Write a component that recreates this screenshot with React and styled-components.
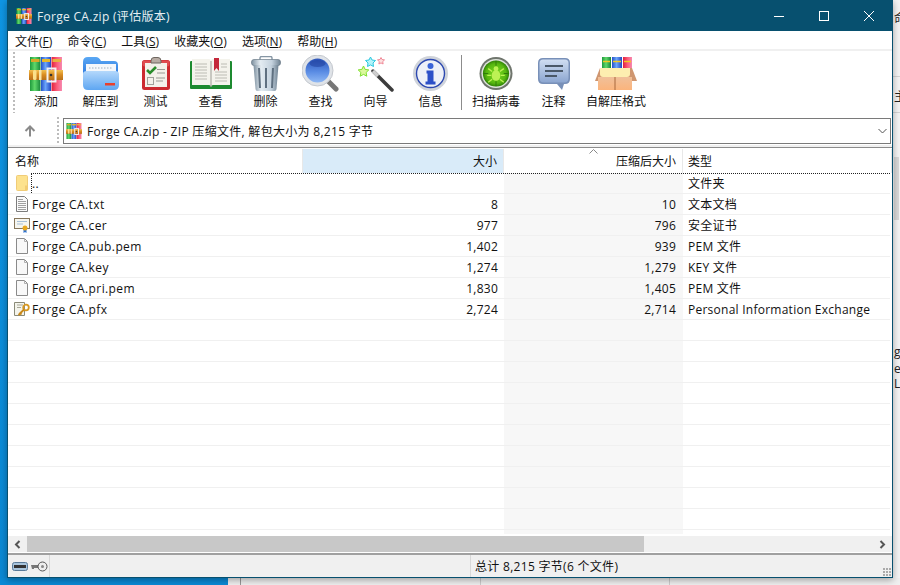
import React from "react";
import styled, { createGlobalStyle } from "styled-components";

const GlobalStyle = createGlobalStyle`
  html, body { margin: 0; padding: 0; height: 100%; overflow: hidden; }
  body { font-family: "Open Sans", "Noto Sans CJK SC", sans-serif; }
  * { box-sizing: border-box; }
`;

// shared gradients for the toolbar drawings
const IconDefs = () => (
  <svg width="0" height="0" style={{ position: "absolute" }}>
    <defs>
      <linearGradient id="bookGreen" x1="0" x2="1" y1="0" y2="0">
        <stop offset="0" stopColor="#1f9a3c" /><stop offset=".45" stopColor="#5fd86a" /><stop offset="1" stopColor="#17863a" />
      </linearGradient>
      <linearGradient id="bookBlue" x1="0" x2="1" y1="0" y2="0">
        <stop offset="0" stopColor="#2450c8" /><stop offset=".45" stopColor="#6aa4fa" /><stop offset="1" stopColor="#2248c0" />
      </linearGradient>
      <linearGradient id="bookRed" x1="0" x2="1" y1="0" y2="0">
        <stop offset="0" stopColor="#e0203c" /><stop offset=".5" stopColor="#fb5a78" /><stop offset="1" stopColor="#f78ab0" />
      </linearGradient>
      <linearGradient id="belt" x1="0" x2="0" y1="0" y2="1">
        <stop offset="0" stopColor="#f2c050" /><stop offset=".5" stopColor="#d88a20" /><stop offset="1" stopColor="#b8701a" />
      </linearGradient>
      <linearGradient id="folderBack" x1="0" x2="0" y1="0" y2="1">
        <stop offset="0" stopColor="#5aa8f4" /><stop offset="1" stopColor="#1f6ad8" />
      </linearGradient>
      <linearGradient id="folderFront" x1="0" x2="0" y1="0" y2="1">
        <stop offset="0" stopColor="#b4d8fb" /><stop offset="1" stopColor="#5ea6f2" />
      </linearGradient>
      <linearGradient id="steel" x1="0" x2="1" y1="0" y2="0">
        <stop offset="0" stopColor="#7d909f" /><stop offset=".3" stopColor="#e4ecf2" /><stop offset=".7" stopColor="#c4d2de" /><stop offset="1" stopColor="#6f8292" />
      </linearGradient>
      <linearGradient id="glass" x1="0" x2="0" y1="0" y2="1">
        <stop offset="0" stopColor="#2c54b8" /><stop offset=".55" stopColor="#5a8ce4" /><stop offset="1" stopColor="#8fb8f4" />
      </linearGradient>
      <linearGradient id="bubble" x1="0" x2="0" y1="0" y2="1">
        <stop offset="0" stopColor="#d0def2" /><stop offset="1" stopColor="#8ca6d0" />
      </linearGradient>
      <linearGradient id="carton" x1="0" x2="0" y1="0" y2="1">
        <stop offset="0" stopColor="#f0c09a" /><stop offset="1" stopColor="#fbb47c" />
      </linearGradient>
      <radialGradient id="radar">
        <stop offset="0" stopColor="#78d820" /><stop offset=".75" stopColor="#58b810" /><stop offset="1" stopColor="#2f8206" />
      </radialGradient>
    </defs>
  </svg>
);

const RarIcon = ({ size = 16 }) => (
  <svg width={size} height={size} viewBox="0 0 34 34">
    <rect x="1" y="0" width="10.500" height="34" fill="url(#bookGreen)" />
    <rect x="12" y="0" width="10" height="34" fill="url(#bookBlue)" />
    <rect x="22.500" y="0" width="10.500" height="34" fill="url(#bookRed)" />
    <rect x="2" y="2" width="8.500" height="3" fill="#d8a828" />
    <rect x="13" y="2" width="8" height="3" fill="#e8b828" />
    <rect x="23.500" y="2" width="8.500" height="3" fill="#e8b040" />
    <rect x="0" y="13" width="34" height="10" fill="url(#belt)" />
    <rect x="4" y="13" width="3.500" height="10" rx="1.500" fill="#fbe08a" />
    <rect x="10" y="13" width="2.500" height="10" fill="#f8e4a8" />
    <rect x="18.500" y="11.500" width="8" height="13" fill="none" stroke="#f2f2f2" strokeWidth="2" />
    <circle cx="22" cy="18" r="1.300" fill="#333" />
  </svg>
);

const FolderIcon = () => (
  <svg width="36" height="33" viewBox="0 0 36 33">
    <path d="M0 5q0-5 5-5h8q3 0 5 4h13q4 0 4 4v16H0z" fill="url(#folderBack)" />
    <rect x="3" y="7" width="30" height="10" fill="#f4f7fb" />
    <path d="M6 11h24" stroke="#9fb0c0" strokeDasharray="1.500 1.500" />
    <path d="M0 17q0-3 4-3h28q4 0 4 3v11q0 5-5 5H5q-5 0-5-5z" fill="url(#folderFront)" />
    <rect x="22" y="26" width="10" height="2.500" fill="#e8402c" />
  </svg>
);

const TestIcon = () => (
  <svg width="28" height="33" viewBox="0 0 28 33">
    <rect x="0" y="3" width="28" height="30" rx="2.500" fill="#cc2a30" />
    <rect x="0.500" y="3.500" width="27" height="6" rx="2" fill="#e04c50" />
    <rect x="3" y="6" width="22" height="24" fill="#f4f1ea" />
    <path d="M9 4q0-3.500 3-3.500h4q3 0 3 3.500v2H9z" fill="#b8aca4" stroke="#6e6660" />
    <path d="M5 13l3 3 6-6" fill="none" stroke="#2a8c2a" strokeWidth="2.600" />
    <path d="M15 12.500h8M15 16h8M14 21h9M14 24h7" stroke="#9a9a94" />
    <rect x="5.500" y="20.500" width="6" height="7" fill="none" stroke="#a0a09a" />
  </svg>
);

const BookIcon = () => (
  <svg width="42" height="31" viewBox="0 0 42 31">
    <rect x="0" y="3" width="42" height="28" rx="1" fill="#1d8a30" />
    <path d="M2 1h17q2 0 2 2q0-2 2-2h17v26H23q-2 0-2 2q0-2-2-2H2z" fill="#f4f3ec" />
    <path d="M5 6h12M5 9h12M5 12h12M5 15h12M5 18h12M5 21h12M25 14h12M25 17h12M25 20h12M25 23h12M31 6h6M31 9h6" stroke="#bcbcb4" />
    <path d="M24 0h5v13l-2.500-3-2.500 3z" fill="#c4283a" />
    <path d="M21 3v26" stroke="#9c9c94" />
  </svg>
);

const TrashIcon = () => (
  <svg width="30" height="35" viewBox="0 0 30 35">
    <rect x="9" y="0.500" width="12" height="5" rx="1.500" fill="none" stroke="#8696a4" strokeWidth="1.400" />
    <rect x="0.500" y="3.500" width="29" height="6" rx="2.500" fill="url(#steel)" stroke="#6b7b88" strokeWidth="0.700" />
    <path d="M2.500 9h25l-2 24q-.2 2-2 2h-17q-2 0-2-2z" fill="url(#steel)" />
    <path d="M8 12l1 20M15 12v20M22 12l-1 20" stroke="#5f7080" strokeWidth="2" />
  </svg>
);

const SearchIcon = () => (
  <svg width="37" height="37" viewBox="0 0 37 37">
    <path d="M25 25l9 9" stroke="#777" strokeWidth="5" strokeLinecap="round" />
    <circle cx="15.500" cy="15.500" r="15.500" fill="#dfe3e8" stroke="#c4c8ce" />
    <circle cx="15.500" cy="15.500" r="12" fill="url(#glass)" />
    <ellipse cx="15.500" cy="8.500" rx="8" ry="3.500" fill="#1f3f9c" opacity=".55" />
  </svg>
);

const WizardIcon = () => (
  <svg width="36" height="36" viewBox="0 0 36 36">
    <path d="M15 15l19 19" stroke="#3c3c3c" strokeWidth="3.500" strokeLinecap="round" />
    <path d="M15 15l5 5" stroke="#cfcfcf" strokeWidth="3.500" />
    <path d="M12.500 1l1.500 3 3.500.5-2.500 2.500.5 3.500-3-1.600-3 1.600.5-3.500L7.500 4.500 11 4z" fill="#b4f4fa" stroke="#2cc8e0" />
    <path d="M23 1.500l1 2 2.500.4-1.800 1.700.4 2.400-2.100-1.100-2.100 1.100.4-2.400-1.800-1.700 2.500-.4z" fill="#fce0e0" stroke="#f08a98" />
    <path d="M5.500 10l1.600 3.400 3.700.5-2.700 2.600.7 3.700-3.300-1.800-3.300 1.800.7-3.700L.2 13.900l3.700-.5z" fill="#dcf89c" stroke="#80e030" />
  </svg>
);

const InfoIcon = () => (
  <svg width="35" height="35" viewBox="0 0 35 35">
    <circle cx="17.500" cy="17.500" r="17.500" fill="#cfd3da" />
    <circle cx="17.500" cy="17.500" r="14" fill="#eef1f8" stroke="#2c48b0" strokeWidth="1.400" />
    <circle cx="17.500" cy="10" r="3" fill="#3a64d8" />
    <path d="M13.500 14.500h7v11h2v3h-10v-3h2v-8h-1z" fill="#2c50c8" />
  </svg>
);

const VirusIcon = () => (
  <svg width="34" height="33" viewBox="0 0 34 34">
    <circle cx="17" cy="17" r="17" fill="#6f756d" />
    <circle cx="17" cy="17" r="15" fill="#dfe4dc" />
    <circle cx="17" cy="17" r="13.500" fill="url(#radar)" />
    <path d="M17 4v5M17 25v5M4 17h5M25 17h5" stroke="#2f7a08" />
    <ellipse cx="17" cy="19" rx="4.500" ry="5.500" fill="#bcf254" />
    <circle cx="17" cy="12" r="2.500" fill="#bcf254" />
    <path d="M13 15l-4-3M21 15l4-3M12 19H8M22 19h4M13 23l-4 3M21 23l4 3" stroke="#bcf254" strokeWidth="1.400" />
  </svg>
);

const CommentIcon = () => (
  <svg width="32" height="32" viewBox="0 0 32 32">
    <path d="M5 0h22q5 0 5 5v16q0 5-5 5h-1l-2 6-5-6H5q-5 0-5-5V5q0-5 5-5z" fill="#7890b8" />
    <path d="M5 1.500h22q3.500 0 3.500 3.500v15q0 4.500-4.500 4.500H6q-4.500 0-4.500-4.500V5q0-3.500 3.500-3.500z" fill="url(#bubble)" />
    <path d="M7 8h18M7 13h18M7 18h12" stroke="#4a5868" strokeWidth="1.800" />
  </svg>
);

const SfxIcon = () => (
  <svg width="42" height="33" viewBox="0 0 42 33">
    <rect x="7" y="0" width="9" height="14" fill="url(#bookGreen)" />
    <rect x="17" y="0" width="10" height="14" fill="url(#bookBlue)" />
    <rect x="28" y="0" width="9" height="14" fill="url(#bookRed)" />
    <path d="M8 4.500h7M18 4.500h8M29 4.500h7" stroke="#f4c820" strokeWidth="1.600" />
    <path d="M0 24l5-13h32l5 13z" fill="#cf9670" />
    <path d="M5 11h30v6q0 3-3 3H8q-3 0-3-3z" fill="#fdeeb0" />
    <rect x="3" y="20" width="34" height="13" fill="url(#carton)" />
    <path d="M20 20v13" stroke="#a8693c" />
  </svg>
);

const FileIcon = () => (
  <svg width="12" height="16" viewBox="0 0 12 16">
    <path d="M.5.5h8l3 3v12H.5z" fill="#f8f8f8" stroke="#8a8a8a" />
    <path d="M8.500.5v3h3" fill="none" stroke="#b0b0b0" />
  </svg>
);

const TextIcon = () => (
  <svg width="12" height="16" viewBox="0 0 12 16">
    <path d="M.5.5h8l3 3v12H.5z" fill="#fafafa" stroke="#7c7c7c" />
    <path d="M2 3.500h5M2 5.500h8M2 7.500h8M2 9.500h8M2 11.500h8M2 13.500h8" stroke="#a0a0a0" />
  </svg>
);

const CertIcon = () => (
  <svg width="16" height="16" viewBox="0 0 16 16">
    <rect x=".5" y="1.500" width="15" height="10" fill="#f6f6f0" stroke="#86765c" />
    <path d="M3 4.500h10M3 7h6" stroke="#a8c0d8" />
    <path d="M9.500 12v4l1.500-1 1.500 1v-4" fill="#2c70d0" />
    <circle cx="11" cy="11" r="2.500" fill="#e8a820" />
  </svg>
);

const PfxIcon = () => (
  <svg width="16" height="16" viewBox="0 0 16 16">
    <path d="M.5 1.500h10v13H.5z" fill="#f4f4ec" stroke="#8a8a78" />
    <path d="M3 4h6M3 6.500h4" stroke="#a8a898" />
    <circle cx="12" cy="6.500" r="2.800" fill="none" stroke="#d89820" strokeWidth="1.800" />
    <path d="M10 8.500 4.500 14M5.500 11.500l2 2" stroke="#c88818" strokeWidth="1.800" />
  </svg>
);

const UpFolderIcon = () => (
  <svg width="12" height="16" viewBox="0 0 12 16">
    <rect x=".5" y=".5" width="11" height="15" rx="1" fill="#fde28e" stroke="#f0cc78" />
    <rect x="9" y="10.500" width="2.500" height="5" fill="#f2cc74" />
  </svg>
);

const MinIcon = () => (
  <svg width="10" height="10" viewBox="0 0 10 10"><path d="M0 5.500h10" stroke="#fff" /></svg>
);
const MaxIcon = () => (
  <svg width="10" height="10" viewBox="0 0 10 10"><rect x=".5" y=".5" width="9" height="9" fill="none" stroke="#fff" /></svg>
);
const CloseIcon = () => (
  <svg width="10" height="10" viewBox="0 0 10 10"><path d="M0 0l10 10M10 0L0 10" stroke="#fff" /></svg>
);
const UpArrow = () => (
  <svg width="12" height="12" viewBox="0 0 12 12"><path d="M6 11.500V1.500M1.500 6 6 1.500 10.500 6" fill="none" stroke="#8a8a8a" strokeWidth="2" /></svg>
);
const ChevronDown = () => (
  <svg width="9" height="6" viewBox="0 0 9 6"><path d="M.5 1l4 4 4-4" fill="none" stroke="#555" /></svg>
);
const SortCaret = () => (
  <svg width="9" height="5" viewBox="0 0 9 5"><path d="M.5 4.500l4-4 4 4" fill="none" stroke="#888" /></svg>
);
const ScrollLeft = () => (
  <svg width="7" height="9" viewBox="0 0 7 9"><path d="M5.500 1 2 4.500 5.500 8" fill="none" stroke="#555" strokeWidth="2" /></svg>
);
const ScrollRight = () => (
  <svg width="7" height="9" viewBox="0 0 7 9"><path d="M1.500 1 5 4.500 1.500 8" fill="none" stroke="#555" strokeWidth="2" /></svg>
);
const DriveIcon = () => (
  <svg width="16" height="9" viewBox="0 0 16 9"><rect x=".5" y=".5" width="15" height="8" rx="2" fill="#a8c4dc" stroke="#5a7a98" /><rect x="2" y="3" width="12" height="3" fill="#333" /></svg>
);
const KeyIcon = () => (
  <svg width="17" height="11" viewBox="0 0 17 11"><path d="M0 4h9v3H3v1H1z" fill="#777" /><circle cx="11.500" cy="5.500" r="4.500" fill="#eee" stroke="#555" /><circle cx="11.500" cy="5.500" r="1.500" fill="#888" /></svg>
);

const menus = [
  ["文件", "F"], ["命令", "C"], ["工具", "S"], ["收藏夹", "O"], ["选项", "N"], ["帮助", "H"],
];

const leftTools = [
  { label: "添加", width: 54, icon: <RarIcon size={34} /> },
  { label: "解压到", width: 55, icon: <FolderIcon /> },
  { label: "测试", width: 55, icon: <TestIcon /> },
  { label: "查看", width: 55, icon: <BookIcon /> },
  { label: "删除", width: 55, icon: <TrashIcon /> },
  { label: "查找", width: 55, icon: <SearchIcon /> },
  { label: "向导", width: 55, icon: <WizardIcon /> },
  { label: "信息", width: 55, icon: <InfoIcon /> },
];

const rightTools = [
  { label: "扫描病毒", width: 66, icon: <VirusIcon /> },
  { label: "注释", width: 49, icon: <CommentIcon /> },
  { label: "自解压格式", width: 76, icon: <SfxIcon /> },
];

const files = [
  { name: "..", size: "", packed: "", type: "文件夹", icon: <UpFolderIcon /> },
  { name: "Forge CA.txt", size: "8", packed: "10", type: "文本文档", icon: <TextIcon /> },
  { name: "Forge CA.cer", size: "977", packed: "796", type: "安全证书", icon: <CertIcon /> },
  { name: "Forge CA.pub.pem", size: "1,402", packed: "939", type: "PEM 文件", icon: <FileIcon /> },
  { name: "Forge CA.key", size: "1,274", packed: "1,279", type: "KEY 文件", icon: <FileIcon /> },
  { name: "Forge CA.pri.pem", size: "1,830", packed: "1,405", type: "PEM 文件", icon: <FileIcon /> },
  { name: "Forge CA.pfx", size: "2,724", packed: "2,714", type: "Personal Information Exchange", icon: <PfxIcon /> },
];

const emptyRows = Array.from({ length: 11 });

export default function App() {
  return (
    <Desktop>
      <GlobalStyle />
      <IconDefs />
      <Upper>
        <DesktopEdge />
        <Window>
          <TitleBar>
            <TitleIcon><RarIcon size={16} /></TitleIcon>
            <TitleText>Forge CA.zip (评估版本)</TitleText>
            <WindowButtons>
              <WindowButton><MinIcon /></WindowButton>
              <WindowButton><MaxIcon /></WindowButton>
              <WindowButton><CloseIcon /></WindowButton>
            </WindowButtons>
          </TitleBar>
          <MenuBar>
            {menus.map(([label, key]) => (
              <MenuItem key={key}>{label}(<u>{key}</u>)</MenuItem>
            ))}
          </MenuBar>
          <Toolbar>
            <ToolGrip />
            {leftTools.map((tool) => (
              <Tool key={tool.label} $width={tool.width}>
                <ToolIcon>{tool.icon}</ToolIcon>
                <span>{tool.label}</span>
              </Tool>
            ))}
            <ToolSeparator />
            {rightTools.map((tool) => (
              <Tool key={tool.label} $width={tool.width}>
                <ToolIcon>{tool.icon}</ToolIcon>
                <span>{tool.label}</span>
              </Tool>
            ))}
          </Toolbar>
          <AddressRow>
            <UpButton><UpArrow /></UpButton>
            <AddressGrip />
            <AddressBox>
              <RarIcon size={16} />
              <AddressText>Forge CA.zip - ZIP 压缩文件, 解包大小为 8,215 字节</AddressText>
              <ChevronDown />
            </AddressBox>
          </AddressRow>
          <ListPane>
            <HeaderRow>
              <HeaderCell $first>名称</HeaderCell>
              <HeaderCell $right $active>大小</HeaderCell>
              <HeaderCell $right>
                <CaretSpot><SortCaret /></CaretSpot>
                压缩后大小
              </HeaderCell>
              <HeaderCell>类型</HeaderCell>
            </HeaderRow>
            <ListBody>
              {files.map((file, i) => (
                <Row key={file.name} $focused={i === 0}>
                  <NameCell>
                    <FileSlot>{file.icon}</FileSlot>
                    {file.name}
                  </NameCell>
                  <SizeCell>{file.size}</SizeCell>
                  <PackedCell>{file.packed}</PackedCell>
                  <Cell>{file.type}</Cell>
                </Row>
              ))}
              {emptyRows.map((_, i) => (
                <Row key={i}>
                  <NameCell />
                  <SizeCell />
                  <PackedCell />
                  <Cell />
                </Row>
              ))}
            </ListBody>
            <ScrollBar>
              <ScrollButton><ScrollLeft /></ScrollButton>
              <ScrollThumb />
              <ScrollTrack />
              <ScrollButton><ScrollRight /></ScrollButton>
            </ScrollBar>
          </ListPane>
          <StatusBar>
            <StatusIcons><DriveIcon /><KeyIcon /></StatusIcons>
            <StatusSpacer />
            <StatusText>总计 8,215 字节(6 个文件)</StatusText>
            <ResizeGrip />
          </StatusBar>
        </Window>
        <BackWindow>
          <BackGlyph $top={9}>命</BackGlyph>
          <BackGlyph $top={87}>主</BackGlyph>
          <BackScroll />
          <BackGlyph $top={343}>g</BackGlyph>
          <BackGlyph $top={360}>e</BackGlyph>
          <BackGlyph $top={375}>L</BackGlyph>
        </BackWindow>
      </Upper>
      <Lower>
        <LowerBlue />
        <LowerGray />
      </Lower>
    </Desktop>
  );
}

const Desktop = styled.div`
  width: 900px;
  height: 585px;
  display: flex;
  flex-direction: column;
  overflow: hidden;
  background: #0a8ad6;
`;

const Upper = styled.div`
  display: flex;
  height: 578px;
`;

const DesktopEdge = styled.div`
  width: 7px;
  background: linear-gradient(180deg, #0f96e4, #0a88d4);
`;

const Window = styled.div`
  width: 886px;
  position: relative;
  z-index: 1;
  display: flex;
  flex-direction: column;
  border: 1px solid #07506f;
  border-top: none;
  background: #f0f0f0;
  color: #111;
  font-size: 12px;
  box-shadow: 0 2px 7px rgba(0, 0, 0, 0.35);
`;

const TitleBar = styled.div`
  height: 31px;
  display: flex;
  align-items: center;
  background: #07506f;
  color: #fff;
  flex: none;
`;

const TitleIcon = styled.span`
  display: flex;
  margin-left: 8px;
`;

const TitleText = styled.span`
  margin-left: 5px;
  letter-spacing: 0.3px;
  color: #e6eef2;
`;

const WindowButtons = styled.div`
  margin-left: auto;
  margin-right: 1px;
  display: flex;
`;

const WindowButton = styled.span`
  width: 45px;
  height: 31px;
  display: flex;
  align-items: center;
  justify-content: center;
`;

const MenuBar = styled.div`
  height: 18px;
  display: flex;
  align-items: flex-start;
  background: #fff;
  padding: 1px 0 0 7px;
  gap: 15.2px;
  flex: none;
`;

const MenuItem = styled.span`
  white-space: nowrap;
`;

const Toolbar = styled.div`
  height: 68px;
  display: flex;
  background: #fff;
  border-top: 2px solid #f0f0f0;
  flex: none;
  padding: 4px 0 0 5px;
`;

const Grip = styled.div`
  width: 2px;
  margin-right: 4px;
  background: repeating-linear-gradient(180deg, #bcbcbc 0 2px, transparent 2px 4px);
  flex: none;
`;

const ToolGrip = styled(Grip)`
  height: 61px;
  margin-top: -3px;
`;

const AddressGrip = styled(Grip)`
  margin-top: -1px;
  margin-bottom: -1px;
`;

const Tool = styled.div`
  width: ${(p) => p.$width}px;
  display: flex;
  flex-direction: column;
  align-items: center;
  flex: none;
  white-space: nowrap;
`;

const ToolIcon = styled.div`
  height: 37px;
  display: flex;
  align-items: center;
  justify-content: center;
`;

const ToolSeparator = styled.div`
  width: 1px;
  height: 55px;
  background: #8c8c8c;
  margin: 0 1px 0 3px;
  flex: none;
`;

const AddressRow = styled.div`
  height: 28px;
  display: flex;
  align-items: stretch;
  background: #fff;
  padding: 1px 0;
  flex: none;
`;

const UpButton = styled.div`
  width: 49px;
  display: flex;
  align-items: center;
  justify-content: center;
  padding-right: 5px;
`;

const AddressBox = styled.div`
  width: 828px;
  display: flex;
  align-items: center;
  gap: 5px;
  padding: 0 3px 0 2px;
  border: 1px solid #7a7a7a;
  background: #fff;
`;

const AddressText = styled.span`
  flex: 1;
  letter-spacing: 0.3px;
`;

const ListPane = styled.div`
  flex: 1;
  display: flex;
  flex-direction: column;
  margin-top: 2px;
  padding: 1px 0;
  border-top: 1px solid #8c8c8c;
  background: #fff;
  min-height: 0;
`;

const columns = "295px 201px 179px 1fr";

const HeaderRow = styled.div`
  height: 24px;
  display: grid;
  grid-template-columns: ${columns};
  flex: none;
`;

const HeaderCell = styled.div`
  position: relative;
  display: flex;
  align-items: center;
  justify-content: ${(p) => (p.$right ? "flex-end" : "flex-start")};
  padding: ${(p) => (p.$first ? "0 6px 0 7px" : p.$right ? "0 6px 0 5px" : "0 5px")};
  background: ${(p) => (p.$active ? "#d9ebf9" : "#fff")};
  border-right: 1px solid #e8e8e8;
`;

const CaretSpot = styled.span`
  position: absolute;
  left: 85px;
  top: 0;
  display: flex;
`;

const ListBody = styled.div`
  flex: 1;
  min-height: 0;
  overflow: hidden;
  margin-bottom: 2px;
`;

const Row = styled.div`
  height: 21px;
  display: grid;
  grid-template-columns: ${columns};
  border-bottom: 1px solid #f0f0f0;
  position: relative;
  margin-right: 2px;
  letter-spacing: 0.25px;
  ${(p) =>
    p.$focused &&
    "&::before { content: ''; position: absolute; left: 23px; right: 0; top: 0; bottom: 0; border-top: 1px dotted #222; border-left: 1px dotted #222; pointer-events: none; }"}
`;

const Cell = styled.div`
  display: flex;
  align-items: center;
  padding: 0 5px;
  white-space: nowrap;
`;

const SizeCell = styled(Cell)`
  justify-content: flex-end;
  padding-right: 6px;
`;

const PackedCell = styled(SizeCell)`
  padding-right: 7px;
  background: #f7f7f7;
`;

const NameCell = styled(Cell)`
  padding: 0 0 0 6px;
  letter-spacing: 0.4px;
`;

const FileSlot = styled.span`
  width: 16px;
  height: 100%;
  display: flex;
  align-items: center;
  justify-content: center;
  margin-right: 2px;
  flex: none;
`;

const ScrollBar = styled.div`
  height: 16px;
  display: flex;
  flex: none;
  background: #f0f0f0;
`;

const ScrollButton = styled.div`
  width: 19px;
  display: flex;
  align-items: center;
  justify-content: center;
`;

const ScrollThumb = styled.div`
  width: 617px;
  background: #c8c8c8;
`;

const ScrollTrack = styled.div`
  flex: 1;
`;

const StatusBar = styled.div`
  height: 24px;
  display: flex;
  align-items: center;
  border-top: 2px solid #a0a0a0;
  background: #f0f0f0;
  flex: none;
  position: relative;
`;

const StatusIcons = styled.div`
  width: 42px;
  height: 100%;
  display: flex;
  align-items: center;
  gap: 3px;
  padding-left: 4px;
  border-right: 1px solid #d8d8d8;
`;

const StatusSpacer = styled.div`
  width: 421px;
  height: 100%;
  border-right: 1px solid #d8d8d8;
`;

const StatusText = styled.span`
  margin-left: 4px;
  letter-spacing: 0.3px;
`;

const ResizeGrip = styled.div`
  position: absolute;
  right: 1px;
  bottom: 1px;
  width: 8px;
  height: 8px;
  background: radial-gradient(circle at 1px 1px, #aaa 1px, transparent 1px) 0 0 / 3px 3px;
`;

const BackWindow = styled.div`
  width: 7px;
  position: relative;
  overflow: hidden;
  background: linear-gradient(#d4d4d4, #d4d4d4) 0 76px / 100% 1px no-repeat,
    linear-gradient(#d4d4d4, #d4d4d4) 0 112px / 100% 1px no-repeat, #f4f4f4;
`;

const BackScroll = styled.div`
  position: absolute;
  left: 1px;
  top: 157px;
  width: 5px;
  height: 63px;
  background: #d8d8d8;
`;

const BackGlyph = styled.span`
  position: absolute;
  left: 1px;
  top: ${(p) => p.$top}px;
  font-size: 12px;
  color: #222;
`;

const Lower = styled.div`
  flex: 1;
  display: flex;
`;

const LowerBlue = styled.div`
  width: 228px;
  background: #0a8ad6;
`;

const LowerGray = styled.div`
  flex: 1;
  background: linear-gradient(#999, #999) 12px 0 / 1px 100% no-repeat,
    linear-gradient(#ccc, #ccc) 252px 0 / 1px 100% no-repeat,
    linear-gradient(#ccc, #ccc) 441px 0 / 1px 100% no-repeat, #f0f0f0;
`;
